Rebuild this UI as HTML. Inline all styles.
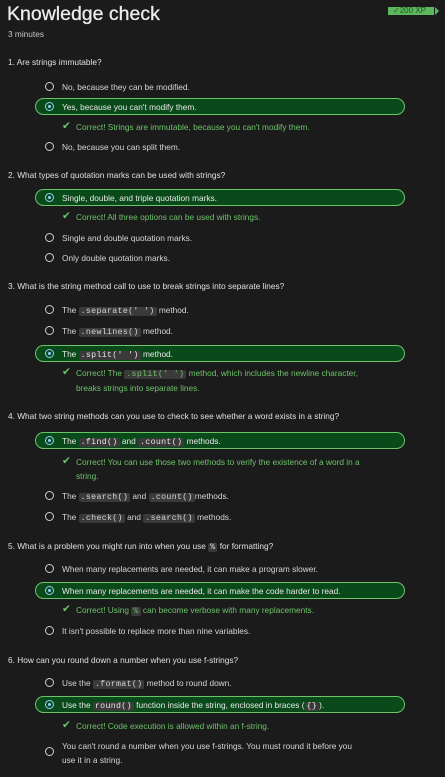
<!DOCTYPE html>
<html><head><meta charset="utf-8"><style>
*{margin:0;padding:0;box-sizing:border-box}
body{width:445px;height:777px;background:#1b1b1b;color:#d6d6d6;font-family:"Liberation Sans",sans-serif;font-size:8.3px;position:relative;overflow:hidden}
.a{position:absolute;white-space:nowrap;line-height:12px}
h1{position:absolute;left:7px;top:3px;font-size:19.5px;font-weight:normal;color:#ececec;-webkit-text-stroke:0.3px #ececec}
.q{left:8px;color:#e0e0e0}
.o{left:62px}
.r{position:absolute;left:45px;width:9px;height:9px;border:1px solid #d0d0d0;border-radius:50%}
.sel{position:absolute;left:35px;width:370px;height:17px;border:1px solid #6cc46a;border-radius:9px;background:#0a4a1a}
.sel .r{left:9px;top:3px;border-color:#8fd0ff}
.sel .r::after{content:"";position:absolute;left:2px;top:2px;width:3px;height:3px;border-radius:50%;background:#8fd0ff}
.sel span{position:absolute;left:26px;top:2px;line-height:12px;color:#e8e8e8;white-space:nowrap}
.c{left:62px;color:#6cc46a}
.c b{font-weight:normal;position:absolute;left:0;top:-1px;font-size:10.5px}
.c i{font-style:normal;padding-left:14px}
code{font-family:"Liberation Mono",monospace;background:#3a3a3a;padding:0 2px;border-radius:2px;font-size:8.3px;letter-spacing:0.3px}
.xp{position:absolute;left:388px;top:7px;width:46px;height:8px;background:#5cb85c;color:#2a4f2a;font-size:8px;line-height:8px;padding-left:5px}
</style></head><body>
<h1>Knowledge check</h1>
<div class="a" style="left:8px;top:28px;color:#c8c8c8">3 minutes</div>
<div class="xp">✓200 XP</div><div style="position:absolute;left:435px;top:7px;width:0;height:0;border-left:4px solid #5cb85c;border-top:4px solid transparent;border-bottom:4px solid transparent"></div>

<div class="a q" style="top:56px">1. Are strings immutable?</div>
<div class="r" style="top:82px"></div><div class="a o" style="top:81px">No, because they can be modified.</div>
<div class="sel" style="top:98px"><div class="r"></div><span>Yes, because you can't modify them.</span></div>
<div class="a c" style="top:121px"><b>✔</b><i>Correct! Strings are immutable, because you can't modify them.</i></div>
<div class="r" style="top:142px"></div><div class="a o" style="top:141px">No, because you can split them.</div>

<div class="a q" style="top:169px">2. What types of quotation marks can be used with strings?</div>
<div class="sel" style="top:189px"><div class="r"></div><span>Single, double, and triple quotation marks.</span></div>
<div class="a c" style="top:211px"><b>✔</b><i>Correct! All three options can be used with strings.</i></div>
<div class="r" style="top:233px"></div><div class="a o" style="top:232px">Single and double quotation marks.</div>
<div class="r" style="top:253px"></div><div class="a o" style="top:252px">Only double quotation marks.</div>

<div class="a q" style="top:280px">3. What is the string method call to use to break strings into separate lines?</div>
<div class="r" style="top:305px"></div><div class="a o" style="top:304px">The <code>.separate(' ')</code> method.</div>
<div class="r" style="top:326px"></div><div class="a o" style="top:325px">The <code>.newlines()</code> method.</div>
<div class="sel" style="top:345px"><div class="r"></div><span>The <code>.split(' ')</code> method.</span></div>
<div class="a c" style="top:367px"><b>✔</b><i>Correct! The <code>.split(' ')</code> method, which includes the newline character,</i></div>
<div class="a c" style="top:382px"><i>breaks strings into separate lines.</i></div>

<div class="a q" style="top:410px">4. What two string methods can you use to check to see whether a word exists in a string?</div>
<div class="sel" style="top:432px"><div class="r"></div><span>The <code>.find()</code> and <code>.count()</code> methods.</span></div>
<div class="a c" style="top:456px"><b>✔</b><i>Correct! You can use those two methods to verify the existence of a word in a</i></div>
<div class="a c" style="top:470px"><i>string.</i></div>
<div class="r" style="top:491px"></div><div class="a o" style="top:490px">The <code>.search()</code> and <code>.count()</code>methods.</div>
<div class="r" style="top:512px"></div><div class="a o" style="top:511px">The <code>.check()</code> and <code>.search()</code> methods.</div>

<div class="a q" style="top:540px">5. What is a problem you might run into when you use <code>%</code> for formatting?</div>
<div class="r" style="top:564px"></div><div class="a o" style="top:563px">When many replacements are needed, it can make a program slower.</div>
<div class="sel" style="top:582px"><div class="r"></div><span>When many replacements are needed, it can make the code harder to read.</span></div>
<div class="a c" style="top:604px"><b>✔</b><i>Correct! Using <code>%</code> can become verbose with many replacements.</i></div>
<div class="r" style="top:626px"></div><div class="a o" style="top:625px">It isn't possible to replace more than nine variables.</div>

<div class="a q" style="top:654px">6. How can you round down a number when you use f-strings?</div>
<div class="r" style="top:678px"></div><div class="a o" style="top:677px">Use the <code>.format()</code> method to round down.</div>
<div class="sel" style="top:696px"><div class="r"></div><span>Use the <code>round()</code> function inside the string, enclosed in braces (<code>{}</code>).</span></div>
<div class="a c" style="top:720px"><b>✔</b><i>Correct! Code execution is allowed within an f-string.</i></div>
<div class="r" style="top:747px"></div><div class="a o" style="top:740px">You can't round a number when you use f-strings. You must round it before you</div>
<div class="a o" style="top:754px">use it in a string.</div>
</body></html>
